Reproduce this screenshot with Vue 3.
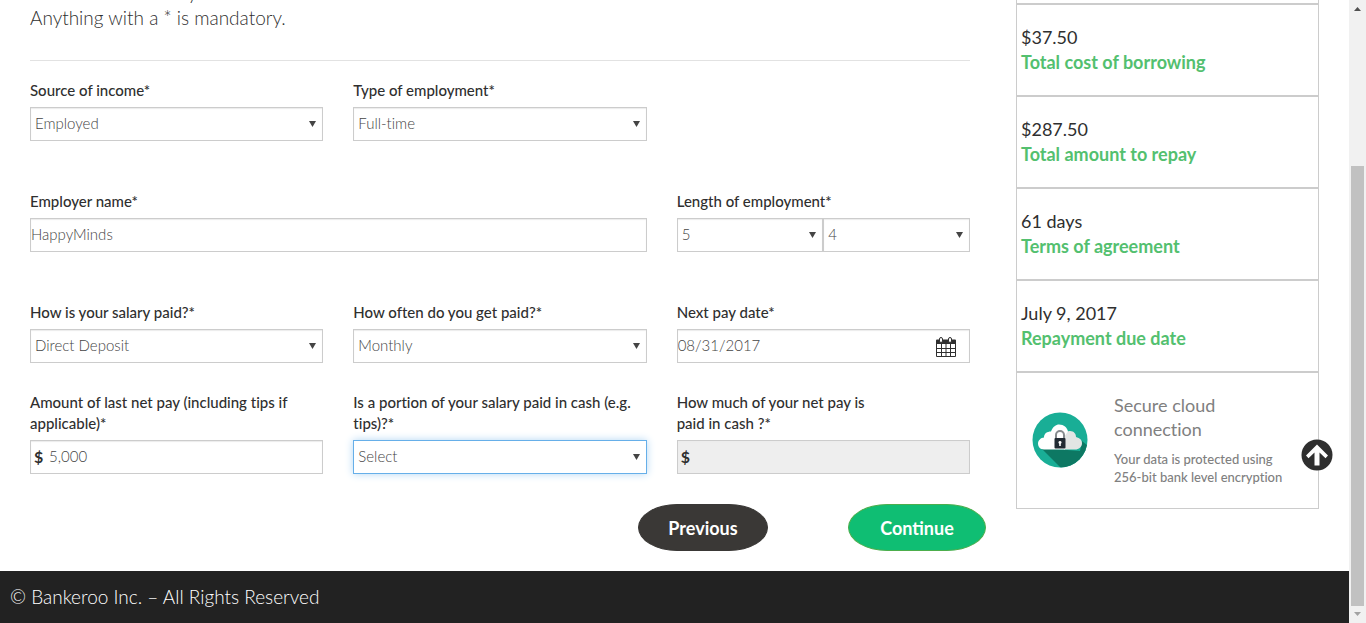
<script setup>
import { reactive } from 'vue'

const form = reactive({
  source: 'Employed',
  type: 'Full-time',
  employer: 'HappyMinds',
  years: '5',
  months: '4',
  method: 'Direct Deposit',
  frequency: 'Monthly',
  nextPay: '08/31/2017',
  netPay: '5,000',
  cash: 'Select',
  cashAmount: '',
})

const summary = [
  { value: '$37.50', label: 'Total cost of borrowing' },
  { value: '$287.50', label: 'Total amount to repay' },
  { value: '61 days', label: 'Terms of agreement' },
  { value: 'July 9, 2017', label: 'Repayment due date' },
]
</script>

<template>
  <div class="window">
    <div class="page">
      <div class="content">
        <main>
          <p class="intro">Please read carefully<br />Anything with a * is mandatory.</p>
          <hr />
          <form @submit.prevent>
            <div class="row">
              <div class="field">
                <label for="source">Source of income*</label>
                <span class="select">
                  <select id="source" v-model="form.source"><option>Employed</option></select>
                  <svg viewBox="0 0 7 6"><path d="M0 0h7L3.5 6z" /></svg>
                </span>
              </div>
              <div class="field">
                <label for="type">Type of employment*</label>
                <span class="select">
                  <select id="type" v-model="form.type"><option>Full-time</option></select>
                  <svg viewBox="0 0 7 6"><path d="M0 0h7L3.5 6z" /></svg>
                </span>
              </div>
            </div>

            <div class="row">
              <div class="field wide">
                <label for="employer">Employer name*</label>
                <input id="employer" v-model="form.employer" type="text" />
              </div>
              <div class="field">
                <label for="years">Length of employment*</label>
                <div class="pair">
                  <span class="select">
                    <select id="years" v-model="form.years"><option>5</option></select>
                    <svg viewBox="0 0 7 6"><path d="M0 0h7L3.5 6z" /></svg>
                  </span>
                  <span class="select">
                    <select v-model="form.months" aria-label="Months"><option>4</option></select>
                    <svg viewBox="0 0 7 6"><path d="M0 0h7L3.5 6z" /></svg>
                  </span>
                </div>
              </div>
            </div>

            <div class="row close">
              <div class="field">
                <label for="method">How is your salary paid?*</label>
                <span class="select">
                  <select id="method" v-model="form.method"><option>Direct Deposit</option></select>
                  <svg viewBox="0 0 7 6"><path d="M0 0h7L3.5 6z" /></svg>
                </span>
              </div>
              <div class="field">
                <label for="frequency">How often do you get paid?*</label>
                <span class="select">
                  <select id="frequency" v-model="form.frequency"><option>Monthly</option></select>
                  <svg viewBox="0 0 7 6"><path d="M0 0h7L3.5 6z" /></svg>
                </span>
              </div>
              <div class="field">
                <label for="next-pay">Next pay date*</label>
                <span class="date">
                  <input id="next-pay" v-model="form.nextPay" type="text" />
                  <svg viewBox="0 0 20 20">
                    <path d="M1 3h18v16.500H1z" fill="#fff" />
                    <path d="M1 2.500h18a1 1 0 0 1 1 1V7H0V3.500a1 1 0 0 1 1-1z" fill="#2f2f2f" />
                    <path d="M.5 6v13.500h19V6M.5 11.500h19M.5 15.500h19M5.500 7v12M10 7v12M14.500 7v12" fill="none" stroke="#2f2f2f" />
                    <rect x="3.500" y=".5" width="3" height="5" rx="1.500" fill="#fff" stroke="#2f2f2f" />
                    <rect x="12.500" y=".5" width="3" height="5" rx="1.500" fill="#fff" stroke="#2f2f2f" />
                  </svg>
                </span>
              </div>
            </div>

            <div class="row last">
              <div class="field">
                <label for="net-pay">Amount of last net pay (including tips if applicable)*</label>
                <span class="money">
                  <b>$</b>
                  <input id="net-pay" v-model="form.netPay" type="text" />
                </span>
              </div>
              <div class="field">
                <label for="cash">Is a portion of your salary paid in cash (e.g. tips)?*</label>
                <span class="select focused">
                  <select id="cash" v-model="form.cash"><option>Select</option></select>
                  <svg viewBox="0 0 7 6"><path d="M0 0h7L3.5 6z" /></svg>
                </span>
              </div>
              <div class="field">
                <label for="cash-amount">How much of your net pay is<br />paid in cash ?*</label>
                <span class="money">
                  <b>$</b>
                  <input id="cash-amount" v-model="form.cashAmount" type="text" disabled />
                </span>
              </div>
            </div>

            <div class="actions">
              <button type="button" class="previous">Previous</button>
              <button type="submit" class="continue">Continue</button>
            </div>
          </form>
        </main>

        <aside>
          <div class="card cut"></div>
          <div v-for="item in summary" :key="item.label" class="card">
            <div>{{ item.value }}</div>
            <div class="caption">{{ item.label }}</div>
          </div>
          <div class="card secure">
            <svg class="cloud" viewBox="0 0 56 56">
              <defs>
                <clipPath id="disc"><circle cx="28" cy="28" r="27.500" /></clipPath>
              </defs>
              <g clip-path="url(#disc)">
                <path d="M0 0h56v56H0z" fill="#19ae96" />
                <path d="M9 36l20 20h27V34l-6-5-2 10z" fill="#0d7863" />
              </g>
              <path d="M32 37.500V24c1-4 4-5 6-5 4 0 6 3 6 6 4 1 6 3 6 6 0 4-3 6.500-7 6.500z" fill="#e2e5e4" />
              <path d="M12 37.500c-4 0-6-3-6-6s3-6 6-6c0-4 3-6 7-6 2-5 5-7 8-7 5 0 8 3 9 7l-3 4v14z" fill="#fff" />
              <path d="M24 27v-4a4 4 0 0 1 8 0v4" fill="none" stroke="#868b8e" stroke-width="2" />
              <rect x="22.500" y="26" width="11" height="10.500" rx="1" fill="#222b33" />
              <path d="M28 29a1.500 1.500 0 0 1 .8 2.800V34h-1.600v-2.200A1.500 1.500 0 0 1 28 29z" fill="#fff" />
            </svg>
            <div>
              <h4>Secure cloud connection</h4>
              <p>Your data is protected using <span>256-bit bank level encryption</span></p>
            </div>
            <a href="#" class="to-top" aria-label="Back to top">
              <svg viewBox="0 0 32 32">
                <circle cx="16" cy="16" r="15.500" fill="#2f2f2f" />
                <path d="M16 5.500L27 16.500l-2.500 2.700-6-5.700V26.500h-5V13.500l-6 5.700L5 16.500z" fill="#fff" />
              </svg>
            </a>
          </div>
        </aside>
      </div>
      <footer>© Bankeroo Inc. – All Rights Reserved</footer>
    </div>

    <div class="scrollbar" aria-hidden="true">
      <svg viewBox="0 0 7 4"><path d="M0 4L3.500 0 7 4z" fill="#505050" /></svg>
      <div class="track"><div class="thumb"></div></div>
      <svg viewBox="0 0 7 4"><path d="M0 0h7L3.500 4z" fill="#a3a3a3" /></svg>
    </div>
  </div>
</template>

<style>
body {
  background: #fff;
  overflow: hidden;
}
</style>

<style scoped>
* {
  box-sizing: border-box;
}

.window {
  display: grid;
  grid-template-columns: minmax(0, 1fr) 17px;
  min-height: 100vh;
  font-family: Lato, "Open Sans", sans-serif;
  font-size: 15px;
  font-variant-ligatures: none;
  color: #2f2f2f;
}

.page {
  display: flex;
  flex-direction: column;
  overflow: hidden;
}

.content {
  flex: 1;
  display: grid;
  grid-template-columns: minmax(0, 1fr) 303px;
  gap: 46px;
  padding: 0 30px 20px;
}

.intro {
  margin: -20px 0 0;
  font-size: 19px;
  font-weight: 300;
  line-height: 25px;
}

hr {
  margin: 30px 0 19px;
  border: 0;
  border-top: 1px solid #e2e2e2;
}

.row {
  display: grid;
  grid-template-columns: repeat(3, minmax(0, 1fr));
  gap: 30px;
  margin-bottom: 50px;
}

.row.close {
  margin-bottom: 29px;
}

.row.last {
  margin-bottom: 30px;
}

.wide {
  grid-column: span 2;
}

label {
  display: block;
  margin-bottom: 6px;
  font-size: 15px;
  font-weight: 500;
  line-height: 21px;
}

input,
select {
  display: block;
  width: 100%;
  height: 34px;
  margin: 0;
  padding: 0 0 2px;
  border: 1px solid #ccc;
  border-radius: 0;
  background: #fff;
  box-shadow: inset 0 1px 1px #ececec;
  font: inherit;
  font-size: 15px;
  font-weight: 300;
  color: #444;
  appearance: none;
  outline: 0;
}

select {
  padding: 0 20px 2px 4px;
}

.select,
.date,
.money {
  display: block;
  position: relative;
}

.select svg {
  position: absolute;
  right: 7px;
  top: 14px;
  width: 7px;
  height: 6px;
  fill: #444;
  pointer-events: none;
}

.focused select {
  border-color: #66afe9;
  box-shadow: 0 0 8px #b3d7f4;
}

.pair {
  display: grid;
  grid-template-columns: 1fr 1fr;
}

.date svg {
  position: absolute;
  right: 14px;
  top: 8px;
  width: 20px;
  height: 20px;
}

.money b {
  position: absolute;
  left: 4px;
  top: 0;
  font-size: 16px;
  line-height: 34px;
}

.money input {
  padding-left: 18px;
}

input:disabled {
  background: #eee;
}

.actions {
  display: flex;
  justify-content: flex-end;
  gap: 80px;
  margin-right: -16px;
}

button {
  height: 47px;
  padding: 0;
  border: 1px solid #3a3836;
  border-radius: 40px / 24px;
  font-family: inherit;
  font-size: 18px;
  font-weight: 700;
  color: #fff;
}

.previous {
  width: 130px;
  background: #3a3836;
}

.continue {
  width: 138px;
  border-color: #4cae4c;
  background: #0fbe73;
}

.card {
  height: 92px;
  padding: 20px 4px 0;
  border: 1px solid #ccc;
  font-size: 18px;
  line-height: 25px;
}

.card.cut {
  height: 4px;
  padding: 0;
  border-top: 0;
}

.caption {
  font-weight: 700;
  color: #53c06f;
}

.card.secure {
  position: relative;
  display: grid;
  grid-template-columns: 56px 1fr;
  column-gap: 26px;
  height: 137px;
  padding: 20px 20px 0 15px;
  color: #808080;
}

.cloud {
  width: 56px;
  height: 56px;
  margin-top: 19px;
}

h4 {
  max-width: 140px;
  margin: 0 0 9px;
  font-size: 18px;
  font-weight: 400;
  line-height: 24px;
}

.secure p {
  margin: 0 -10px 0 0;
  font-size: 13px;
  font-weight: 500;
  line-height: 18px;
}

.secure p span {
  white-space: nowrap;
}

.to-top {
  position: absolute;
  right: -15px;
  top: 66px;
  width: 32px;
  height: 32px;
}

.to-top svg {
  display: block;
}

footer {
  padding: 13px 10px 14px;
  background: #222;
  font-size: 19px;
  font-weight: 300;
  line-height: 25px;
  color: #fff;
}

.scrollbar {
  display: flex;
  flex-direction: column;
  align-items: center;
  padding: 7px 2px;
  background: #f1f1f1;
}

.scrollbar svg {
  width: 7px;
  height: 4px;
}

.track {
  flex: 1;
  display: flex;
  flex-direction: column;
  justify-content: flex-end;
  width: 13px;
  padding-bottom: 6px;
}

.thumb {
  height: 74%;
  background: #c1c1c1;
}
</style>
